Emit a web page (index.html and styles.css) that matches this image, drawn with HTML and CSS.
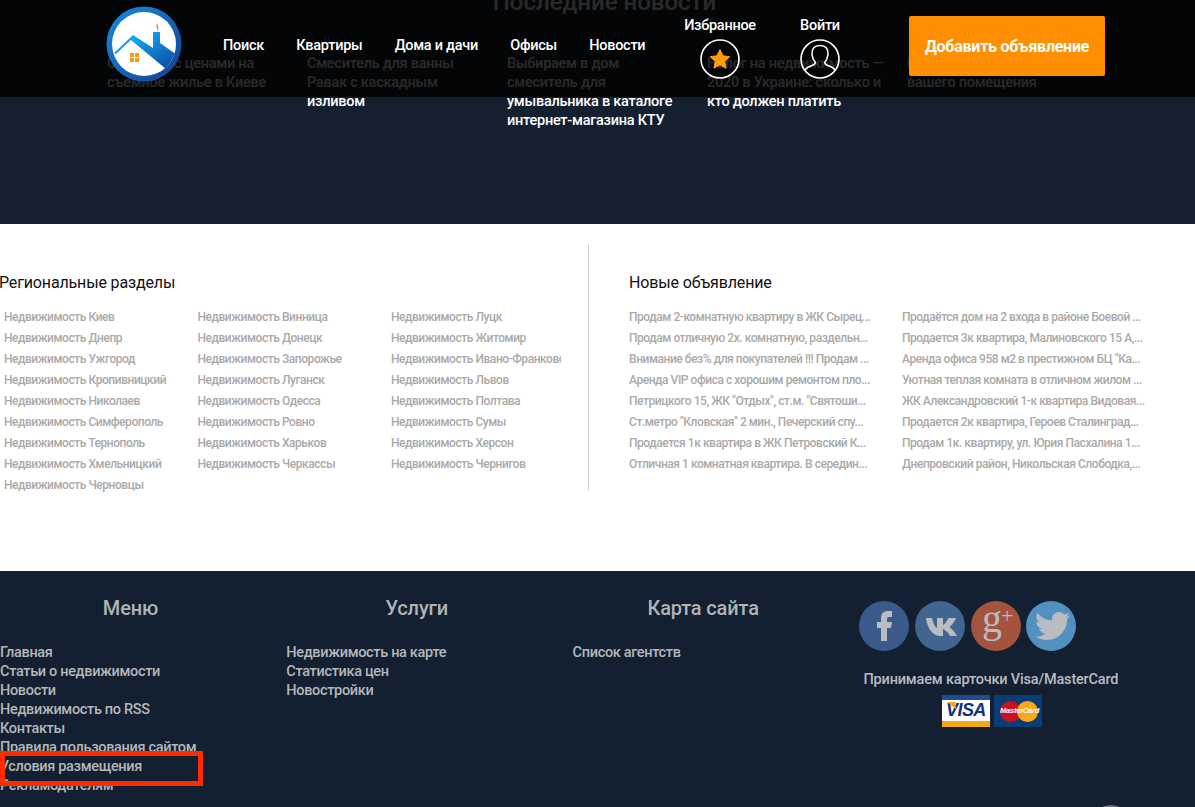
FILE: index.html
```html
<!DOCTYPE html>
<html lang="ru">
<head>
<meta charset="utf-8">
<title>Недвижимость</title>
<link rel="stylesheet" href="styles.css">
</head>
<body>
<header class="topbar">
  <a class="logo" href="#">
    <svg viewBox="0 0 76 76" width="76" height="76">
      <defs>
        <linearGradient id="ring" x1="0" y1="0" x2="1" y2="1"><stop offset="0" stop-color="#1a8be0"/><stop offset="1" stop-color="#123f92"/></linearGradient>
        <linearGradient id="roof" x1="0" y1="0" x2="1" y2="1"><stop offset="0.25" stop-color="#12a5ee"/><stop offset="1" stop-color="#0d3f9a"/></linearGradient>
        <clipPath id="disc"><circle cx="38" cy="38" r="32"/></clipPath>
      </defs>
      <circle cx="38" cy="38" r="37.5" fill="url(#ring)"/>
      <circle cx="38" cy="38" r="32" fill="#fff"/>
      <g clip-path="url(#disc)">
        <path d="M8 47 L27 29 L47 42 L47 26 L54 26 L54 37 L74 51 L60 63 L25 34 L10 48 Z" fill="url(#roof)"/>
      </g>
      <path d="M51 17 q-1.500 3 0 5 q1 2 0 4 q2.500-3 1-6 q-.7-1.500-1-3z" fill="#d98a5a"/>
      <g fill="#f59a0c"><rect x="24" y="47" width="4" height="4"/><rect x="29" y="47" width="4" height="4"/><rect x="24" y="52" width="4" height="4"/><rect x="29" y="52" width="4" height="4"/></g>
    </svg>
  </a>
  <nav class="mainnav">
    <a href="#">Поиск</a>
    <a href="#">Квартиры</a>
    <a href="#">Дома и дачи</a>
    <a href="#">Офисы</a>
    <a href="#">Новости</a>
  </nav>
  <div class="usertool usertool-fav">
    <span>Избранное</span>
    <svg viewBox="0 0 40 40" width="40" height="40"><circle cx="20" cy="20" r="19" fill="none" stroke="#fff" stroke-width="1.6"/><path d="M20 10.500 l3 6.300 6.800.9 -5 4.700 1.300 6.800 -6.100-3.300 -6.100 3.300 1.300-6.800 -5-4.700 6.800-.9z" fill="#ff9d0a" stroke="#ff9d0a" stroke-linejoin="round"/></svg>
  </div>
  <div class="usertool usertool-login">
    <span>Войти</span>
    <svg viewBox="0 0 40 40" width="40" height="40"><circle cx="20" cy="20" r="19" fill="none" stroke="#fff" stroke-width="1.6"/><path d="M5 31 q2-3 7-4.500 q3-1 3.500-3 q-3-3-3.500-8 q-.5-9 8-9 q8.500 0 8 9 q-.5 5-3.500 8 q.5 2 3.500 3 q5 1.500 7 4.500" fill="none" stroke="#fff" stroke-width="1.6"/></svg>
  </div>
  <a class="addbtn" href="#">Добавить объявление</a>
</header>

<section class="news">
  <h2 class="news-title">Последние новости</h2>
  <div class="news-grid">
    <a href="#">Страница с ценами на съемное жилье в Киеве</a>
    <a href="#">Смеситель для ванны Равак с каскадным изливом</a>
    <a href="#">Выбираем в дом смеситель для умывальника в каталоге интернет-магазина КТУ</a>
    <a href="#">Налог на недвижимость — 2020 в Украине: сколько и кто должен платить</a>
    <a href="#">Как сделать ремонт внутри вашего помещения</a>
  </div>
</section>

<section class="links">
  <div class="regions">
    <h3>Региональные разделы</h3>
    <ul class="region-list">
      <li>Недвижимость Киев</li><li>Недвижимость Винница</li><li>Недвижимость Луцк</li>
      <li>Недвижимость Днепр</li><li>Недвижимость Донецк</li><li>Недвижимость Житомир</li>
      <li>Недвижимость Ужгород</li><li>Недвижимость Запорожье</li><li>Недвижимость Ивано-Франковск</li>
      <li>Недвижимость Кропивницкий</li><li>Недвижимость Луганск</li><li>Недвижимость Львов</li>
      <li>Недвижимость Николаев</li><li>Недвижимость Одесса</li><li>Недвижимость Полтава</li>
      <li>Недвижимость Симферополь</li><li>Недвижимость Ровно</li><li>Недвижимость Сумы</li>
      <li>Недвижимость Тернополь</li><li>Недвижимость Харьков</li><li>Недвижимость Херсон</li>
      <li>Недвижимость Хмельницкий</li><li>Недвижимость Черкассы</li><li>Недвижимость Чернигов</li>
      <li>Недвижимость Черновцы</li>
    </ul>
  </div>
  <div class="fresh">
    <h3>Новые объявление</h3>
    <ul class="fresh-list">
      <li>Продам 2-комнатную квартиру в ЖК Сырец...</li><li>Продаётся дом на 2 входа в районе Боевой ...</li>
      <li>Продам отличную 2х. комнатную, раздельн...</li><li>Продается 3к квартира, Малиновского 15 А,...</li>
      <li>Внимание без% для покупателей !!! Продам ...</li><li>Аренда офиса 958 м2 в престижном БЦ "Ка...</li>
      <li>Аренда VIP офиса с хорошим ремонтом пло...</li><li>Уютная теплая комната в отличном жилом ...</li>
      <li>Петрицкого 15, ЖК "Отдых", ст.м. "Святоши...</li><li>ЖК Александровский 1-к квартира Видовая...</li>
      <li>Ст.метро "Кловская" 2 мин., Печерский спу...</li><li>Продается 2к квартира, Героев Сталинград...</li>
      <li>Продается 1к квартира в ЖК Петровский К...</li><li>Продам 1к. квартиру, ул. Юрия Пасхалина 1...</li>
      <li>Отличная 1 комнатная квартира. В середин...</li><li>Днепровский район, Никольская Слободка,...</li>
    </ul>
  </div>
</section>

<footer class="footer">
  <div class="foot-col">
    <h4>Меню</h4>
    <ul>
      <li>Главная</li><li>Статьи о недвижимости</li><li>Новости</li><li>Недвижимость по RSS</li><li>Контакты</li><li>Правила пользования сайтом</li><li>Условия размещения</li><li>Рекламодателям</li>
    </ul>
    <div class="redbox"></div>
  </div>
  <div class="foot-col">
    <h4>Услуги</h4>
    <ul><li>Недвижимость на карте</li><li>Статистика цен</li><li>Новостройки</li></ul>
  </div>
  <div class="foot-col">
    <h4>Карта сайта</h4>
    <ul><li>Список агентств</li></ul>
  </div>
  <div class="foot-side">
    <div class="socials">
      <a class="soc soc-fb" href="#"><svg viewBox="0 0 50 50" width="50" height="50"><path d="M22 40 V27 H18 V21 H22 V17 C22 12 25 10 29 10 H33 V16 H30 C28 16 28 17 28 18.500 V21 H33 L32 27 H28 V40Z" fill="#b9bcc0"/></svg></a>
      <a class="soc soc-vk" href="#"><svg viewBox="0 0 50 50" width="50" height="50"><path d="M11 17 H17 C18 22 20 26 22 27 V17 H28 V24 C30 23 32 20 33.500 17 H41 C40 20 37 24 34.500 26 C37 28 40 31 42 35 H35 C33 31 30 29 28 28 V35 H25 C18 35 12 27 11 17Z" fill="#b9bcc0"/></svg></a>
      <a class="soc soc-gp" href="#"><span class="gp-g">g</span><span class="gp-plus">+</span></a>
      <a class="soc soc-tw" href="#"><svg viewBox="0 0 50 50" width="50" height="50"><path d="M44 14 C42.500 15 41 15.500 40 15.500 C41.500 14.500 42.500 13 43 11.500 C41.500 12.500 40 13 38.500 13.500 C37 12 35 11 33 11 C29 11 26 14 26 18 C26 18.500 26 19 26.200 19.500 C20 19.200 15 16.500 11.500 12 C9.500 15.500 10.500 19.500 13.500 21.500 C12.500 21.500 11.300 21 10.300 20.500 C10.300 24 12.800 27 16 27.700 C15 28 14 28 13 27.800 C14 30.500 16.500 32.500 19.500 32.600 C16.500 35 13 36 9.500 35.600 C13 37.700 17 39 21 39 C34 39 41 28 41 19 V18 C42 17 43.500 15.500 44 14Z" fill="#b9bcc0"/></svg></a>
    </div>
    <p class="cards-label">Принимаем карточки Visa/MasterCard</p>
    <div class="cards">
      <div class="card-visa"><span>VISA</span></div>
      <div class="card-mc"><i class="mc-red"></i><i class="mc-yellow"></i><span>MasterCard</span></div>
    </div>
  </div>
  <div class="totop"></div>
</footer>
</body>
</html>
```
FILE: styles.css
```css
* { box-sizing: border-box; }
html, body { margin: 0; padding: 0; }
html { height: 807px; overflow: hidden; }
body { font-family: Roboto, "Liberation Sans", sans-serif; background: #fff; height: 807px; overflow: hidden; position: relative; }
a { color: inherit; text-decoration: none; }
ul { list-style: none; margin: 0; padding: 0; }

.topbar { position: absolute; left: 0; top: 0; width: 100%; height: 97px; background: rgba(0,0,0,.84); color: #fff; display: flex; align-items: flex-start; font-weight: 500; font-size: 14.5px; letter-spacing: -.28px; z-index: 5; }
.logo { display: block; margin: 6px 0 0 105.500px; width: 76px; height: 76px; flex: none; }
.mainnav { display: flex; gap: 32.3px; margin: 37px 0 0 41.5px; line-height: 18px; width: 447px; flex: none; }
.usertool { display: flex; flex-direction: column; align-items: center; gap: 4px; line-height: 18px; margin-top: 17px; flex: none; }
.usertool svg { display: block; }
.usertool-fav { width: 72px; margin-left: 14px; }
.usertool-login { width: 40px; margin-left: 44px; }
.addbtn { display: flex; align-items: center; justify-content: center; margin: 16px 0 0 69px; width: 196px; height: 60px; background: #ff8f00; border-radius: 2px; font-size: 16px; font-weight: 700; letter-spacing: -.25px; flex: none; }

.news { height: 224px; background: #14202f; overflow: hidden; color: #fff; }
.news-title { margin: -12px 0 0; height: 28px; line-height: 28px; text-align: center; font-size: 24px; font-weight: 500; color: #fff; padding-left: 14px; }
.news-grid { display: grid; grid-template-columns: repeat(5, 200px); margin: 38px 0 0 107px; }
.news-grid a { display: block; padding-right: 16px; font-size: 14.5px; letter-spacing: -.25px; font-weight: 500; line-height: 19px; }

.links { height: 347px; display: flex; padding-top: 20px; }
.links h3 { margin: 0; font-size: 16px; font-weight: 400; letter-spacing: -.15px; line-height: 20px; color: #111; }
.regions { width: 589px; height: 246px; padding-top: 29px; border-right: 1px solid #ccc; flex: none; }
.regions h3 { margin-left: -1px; }
.region-list { display: grid; grid-template-columns: repeat(3, 193.5px); grid-auto-rows: 21px; margin-top: 14px; padding-left: 4px; }
.region-list li, .fresh-list li { font-size: 12px; letter-spacing: -.45px; line-height: 21px; font-weight: 500; color: #aaa; white-space: nowrap; overflow: hidden; }
.region-list li:nth-child(3n) { width: 170px; }
.region-list li:last-child { width: auto; }
.fresh { padding: 29px 0 0 40px; }
.fresh-list { display: grid; grid-template-columns: 273px 260px; grid-auto-rows: 21px; margin-top: 14px; }

.footer { height: 236px; background: #122031; display: flex; color: #b5b7ba; position: relative; overflow: hidden; }
.foot-col { width: 286.3px; flex: none; }
.foot-col h4 { margin: 23.500px 0 0; font-size: 20px; font-weight: 500; letter-spacing: -.15px; line-height: 26px; text-align: center; width: 261px; color: #b0b3b7; }
.foot-col ul { margin-top: 22.500px; }
.foot-col li { font-size: 14.5px; letter-spacing: -.33px; font-weight: 500; line-height: 19px; }
.redbox { position: absolute; left: 0; top: 180px; width: 203px; height: 35px; border: 5px solid #ff2a00; }
.foot-side { width: 265px; padding-top: 30px; }
.socials { display: flex; gap: 6px; }
.soc { width: 50px; height: 50px; border-radius: 50%; display: block; flex: none; position: relative; overflow: hidden; }
.soc svg { display: block; }
.soc-fb { background: #3b5a8c; }
.soc-vk { background: #40658f; }
.soc-gp { background: #a4533f; margin-right: -1px; }
.soc-tw { background: #5291bf; }
.gp-g { position: absolute; left: 11px; top: -2.500px; font-family: "Liberation Serif", serif; font-size: 40px; line-height: 40px; color: #b9bcc0; }
.gp-plus { position: absolute; left: 30px; top: 3px; font-family: "Liberation Serif", serif; font-size: 22px; line-height: 24px; color: #b9bcc0; }
.cards-label { margin: 20px 0 0; width: 264px; font-size: 14.5px; letter-spacing: -.18px; font-weight: 500; line-height: 18px; text-align: center; color: #b9bcc0; }
.cards { display: flex; gap: 4px; margin: 6px 0 0 83px; }
.card-visa { width: 48px; height: 32px; background: #fff; border-top: 5px solid #1f4a94; border-bottom: 6px solid #f4a912; display: flex; align-items: center; justify-content: center; position: relative; }
.card-visa::before { content: ""; position: absolute; left: 5px; top: 2px; width: 9px; height: 7px; background: #f4a912; clip-path: polygon(0 0, 100% 0, 100% 100%); }
.card-visa span { color: #15317e; font: italic 700 18px/21px "Liberation Sans", sans-serif; letter-spacing: -.6px; }
.card-mc { width: 48px; height: 32px; background: #0a3d77; position: relative; overflow: hidden; }
.mc-red, .mc-yellow { position: absolute; top: 6px; width: 21px; height: 21px; border-radius: 50%; }
.mc-red { left: 6px; background: #cd1020; }
.mc-yellow { left: 23px; background: #f8a91b; }
.card-mc span { position: absolute; left: 6px; top: 11px; font: italic 700 7.500px/10px "Liberation Sans", sans-serif; color: #fff; letter-spacing: -.2px; }
.totop { position: absolute; left: 1091px; top: 234px; width: 40px; height: 40px; border-radius: 50%; background: #6a7480; }
```
